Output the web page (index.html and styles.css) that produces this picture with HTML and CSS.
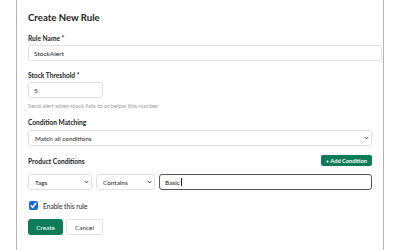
FILE: index.html
```html
<!DOCTYPE html>
<html lang="en">
<head>
  <meta charset="UTF-8">
  <meta name="viewport" content="width=device-width, initial-scale=1">
  <title>Create New Rule</title>
  <link rel="stylesheet" href="styles.css">
</head>
<body>

<div class="panel">
  <h2 class="title">Create New Rule</h2>

  <div class="field">
    <label class="label" for="name">Rule Name *</label>
    <input class="input input-wide" id="name" type="text" value="StockAlert">
  </div>

  <div class="field field-stock">
    <label class="label" for="threshold">Stock Threshold *</label>
    <input class="input input-small" id="threshold" type="number" value="5">
    <p class="help">Send alert when stock falls to or below this number</p>
  </div>

  <div class="field field-match">
    <label class="label" for="matching">Condition Matching</label>
    <div class="select-wrap">
      <select class="select" id="matching">
        <option>Match all conditions</option>
        <option>Match any condition</option>
      </select>
      <svg class="chevron" viewBox="0 0 6 4"><path d="M1 1l2 2 2-2" fill="none" stroke="#222" stroke-width="1.1"/></svg>
    </div>
  </div>

  <div class="conditions-head">
    <span class="label">Product Conditions</span>
    <button class="add-btn">+ Add Condition</button>
  </div>

  <div class="condition-row">
    <div class="select-wrap col-field">
      <select class="select">
        <option>Tags</option>
        <option>Title</option>
        <option>Vendor</option>
      </select>
      <svg class="chevron" viewBox="0 0 6 4"><path d="M1 1l2 2 2-2" fill="none" stroke="#222" stroke-width="1.1"/></svg>
    </div>
    <div class="select-wrap col-op">
      <select class="select">
        <option>Contains</option>
        <option>Equals</option>
      </select>
      <svg class="chevron" viewBox="0 0 6 4"><path d="M1 1l2 2 2-2" fill="none" stroke="#222" stroke-width="1.1"/></svg>
    </div>
    <div class="input input-focus">Basic<span class="caret"></span></div>
  </div>

  <label class="check">
    <input type="checkbox" checked>
    <span>Enable this rule</span>
  </label>

  <div class="actions">
    <button class="btn btn-primary">Create</button>
    <button class="btn btn-cancel">Cancel</button>
  </div>
</div>

</body>
</html>
```

FILE: styles.css
```css
* {
  box-sizing: border-box;
  margin: 0;
  padding: 0;
}

body {
  font-family: Lato, 'Liberation Sans', sans-serif;
  background: #fff;
  color: #222;
}

.panel {
  margin: 0 16px;
  height: 250px;
  border-left: 1px solid #b4b4b4;
  border-right: 1px solid #b4b4b4;
  padding: 12px 11px 0;
}

.title {
  font-size: 9.6px;
  line-height: 12px;
  font-weight: 700;
  color: #222;
}

.label {
  display: block;
  font-size: 6.6px;
  line-height: 10px;
  font-weight: 700;
  color: #222;
}

.field {
  margin-top: 9px;
}

.field .label {
  margin-bottom: 2px;
}

.field-stock {
  margin-top: 9px;
}

.field-match {
  margin-top: 7px;
}

.field-match .label {
  margin-bottom: 3px;
}

.input {
  display: block;
  height: 16px;
  border: 1px solid #e1e1e1;
  border-radius: 3px;
  padding: 0 5px;
  font-family: inherit;
  font-size: 6.5px;
  color: #222;
  background: #fff;
  outline: none;
}

.input-wide {
  width: calc(100% + 10px);
}

.input-small {
  width: 75px;
  -moz-appearance: textfield;
}

.input-small::-webkit-inner-spin-button {
  -webkit-appearance: none;
}

.help {
  margin-top: 4px;
  font-size: 5.8px;
  line-height: 8px;
  color: #9a9a9a;
}

.select-wrap {
  position: relative;
}

.select {
  display: block;
  width: 100%;
  height: 16px;
  appearance: none;
  -webkit-appearance: none;
  border: 1px solid #e1e1e1;
  border-radius: 3px;
  padding: 0 6px;
  font-family: inherit;
  font-size: 6.4px;
  color: #222;
  background: #fff;
}

.chevron {
  position: absolute;
  right: 3px;
  top: 6px;
  width: 5px;
  height: 4px;
}

.conditions-head {
  display: flex;
  justify-content: space-between;
  align-items: center;
  margin-top: 9px;
  height: 11px;
}

.add-btn {
  height: 11px;
  padding: 0 5px;
  border: none;
  border-radius: 2px;
  background: #0e7c58;
  color: #fff;
  font-family: inherit;
  font-size: 5.7px;
  font-weight: 700;
}

.condition-row {
  display: flex;
  gap: 4px;
  margin-top: 8px;
}

.col-field {
  width: 64px;
}

.col-op {
  width: 59px;
}

.input-focus {
  flex: 1;
  display: flex;
  align-items: center;
  border: 1.5px solid #555;
  padding: 0 5px;
}

.caret {
  display: inline-block;
  width: 1px;
  height: 8px;
  margin-left: 1px;
  background: #222;
}

.check {
  display: flex;
  align-items: center;
  gap: 5px;
  margin-top: 11px;
  margin-left: 1px;
  font-size: 6.6px;
  color: #222;
}

.check input {
  width: 9px;
  height: 9px;
  accent-color: #1b6cd8;
}

.actions {
  display: flex;
  gap: 3px;
  margin-top: 9px;
}

.btn {
  height: 16px;
  border-radius: 3px;
  font-family: inherit;
  font-size: 6.4px;
}

.btn-primary {
  width: 35px;
  border: none;
  background: #0e7c58;
  color: #fff;
}

.btn-cancel {
  width: 37px;
  border: 1px solid #e1e1e1;
  background: #fff;
  color: #333;
}
```
